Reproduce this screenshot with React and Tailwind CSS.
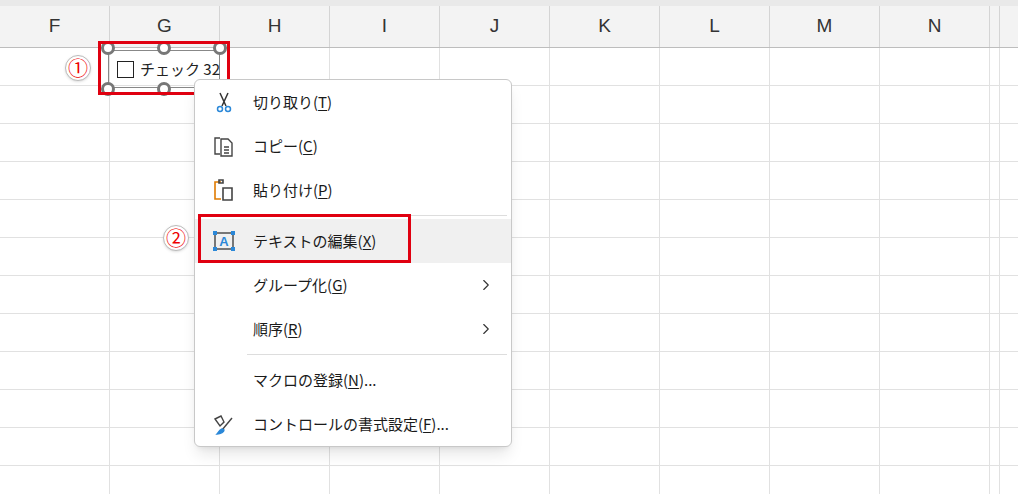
import { ChevronRight } from 'lucide-react'

const cols = ['F', 'G', 'H', 'I', 'J', 'K', 'L', 'M', 'N']
const font = { fontFamily: '"Noto Sans CJK JP", "Noto Sans", sans-serif' }

function U({ c }) {
  return <span className="underline underline-offset-2">{c}</span>
}

function Item({ icon, children, arrow, hl }) {
  return (
    <div className={`flex items-center h-[44px] pr-4 ${hl ? 'bg-[#f0f0f0]' : ''}`}>
      <div className="w-[58px] flex justify-center">{icon}</div>
      <div className="flex-1 text-[15px] text-[#1a1a1a] whitespace-nowrap">{children}</div>
      {arrow && <ChevronRight size={18} strokeWidth={1.5} className="text-[#333]" />}
    </div>
  )
}

function Sep() {
  return <div className="border-t border-[#ddd] ml-[52px] mr-1 my-[3px]" />
}

function Circ({ n }) {
  return (
    <div className="w-[26px] h-[26px] rounded-full bg-white border border-[#bbb] shadow flex items-center justify-center text-[#e00] text-[20px] leading-none">{n}</div>
  )
}

export default function App() {
  return (
    <div className="relative w-[1018px] h-[494px] bg-white overflow-hidden" style={font}>
      <div className="h-[6px] bg-[#e9e9e9]" />
      <div className="flex h-[42px] bg-[#f3f3f3] border-b border-[#bdbdbd]">
        {cols.map(c => (
          <div key={c} className="w-[110px] shrink-0 border-r border-[#d4d4d4] flex items-center justify-center text-[19px] text-[#333]" style={{ fontFamily: '"Liberation Sans", sans-serif' }}>{c}</div>
        ))}
        <div className="w-[10px] border-r border-[#d4d4d4]" />
      </div>
      {Array.from({ length: 12 }).map((_, r) => (
        <div key={r} className="flex h-[38px] border-b border-[#e1e1e1]">
          {cols.map(c => <div key={c} className="w-[110px] shrink-0 border-r border-[#e1e1e1]" />)}
          <div className="w-[10px] border-r border-[#e1e1e1]" />
        </div>
      ))}

      {/* checkbox control */}
      <div className="absolute left-[108px] top-[50px] w-[112px] h-[38px] border border-[#888] flex items-center gap-1.5 pl-2 whitespace-nowrap">
        <div className="w-[17px] h-[17px] border border-[#222] shrink-0" />
        <span className="text-[15px] text-[#222]">チェック 32</span>
      </div>
      {[[108, 48], [164, 48], [220, 48], [108, 89], [164, 89]].map(([x, y], i) => (
        <div key={i} className="absolute w-[14px] h-[14px] rounded-full border-[3px] border-[#777] bg-white" style={{ left: x - 7, top: y - 7 }} />
      ))}
      <div className="absolute left-[98px] top-[41px] w-[132px] h-[54px] border-[3px] border-[#e00010]" />
      <div className="absolute left-[65px] top-[55px]"><Circ n="①" /></div>

      {/* context menu */}
      <div className="absolute left-[194px] top-[79px] w-[318px] bg-white border border-[#c8c8c8] rounded-md shadow-lg">
        <Item icon={
          <svg width="20" height="22" viewBox="0 0 20 22" fill="none" stroke="#2b88d8" strokeWidth="1.5"><path d="M6 2 L12 15 M14 2 L8 15" stroke="#333" /><circle cx="6" cy="18" r="2.5" /><circle cx="14" cy="18" r="2.5" /></svg>
        }>切り取り(<U c="T" />)</Item>
        <Item icon={
          <svg width="22" height="24" viewBox="0 0 22 24" fill="none" stroke="#444" strokeWidth="1.4"><path d="M7 4 H2 V20 H7" /><path d="M8 5 H15 L19 9 V22 H8 Z" /><path d="M11 13 H16 M11 16 H16 M11 19 H16" /></svg>
        }>コピー(<U c="C" />)</Item>
        <Item icon={
          <svg width="22" height="24" viewBox="0 0 22 24" fill="none" strokeWidth="1.6"><path d="M8 4 H2 V21 H8" stroke="#e07b00" /><path d="M6 5 V2 H10 V5 Z" stroke="#444" /><path d="M10 10 H19 V22 H10 Z" stroke="#444" /></svg>
        }>貼り付け(<U c="P" />)</Item>
        <Sep />
        <Item hl icon={
          <svg width="24" height="22" viewBox="0 0 24 22" fill="none"><rect x="3" y="3" width="18" height="16" stroke="#444" strokeWidth="1.4" /><text x="12" y="16" textAnchor="middle" fontSize="13" fontWeight="bold" fill="#2b88d8" fontFamily="Liberation Sans, sans-serif">A</text>{[[3, 3], [21, 3], [3, 19], [21, 19]].map(([x, y], i) => <rect key={i} x={x - 2} y={y - 2} width="4" height="4" fill="#2b88d8" />)}</svg>
        }>テキストの編集(<U c="X" />)</Item>
        <Item arrow>グループ化(<U c="G" />)</Item>
        <Item arrow>順序(<U c="R" />)</Item>
        <Sep />
        <Item>マクロの登録(<U c="N" />)...</Item>
        <Item icon={
          <svg width="24" height="22" viewBox="0 0 24 22" fill="none" strokeWidth="1.4"><path d="M3 6 L9 3 L12 9 L8 13 Z" stroke="#444" /><path d="M20 5 L10 17" stroke="#444" /><path d="M10 16 C7 17 6 20 5 21 C9 21 12 19 12 17 Z" fill="#2b88d8" stroke="#2b88d8" /></svg>
        }>コントロールの書式設定(<U c="F" />)...</Item>
      </div>

      <div className="absolute left-[198px] top-[214px] w-[213px] h-[49px] border-[3px] border-[#e00010]" />
      <div className="absolute left-[163px] top-[225px]"><Circ n="②" /></div>
    </div>
  )
}
